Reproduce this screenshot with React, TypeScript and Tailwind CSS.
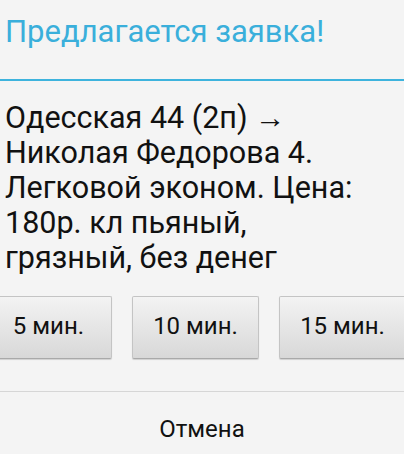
export default function App() {
  const times = ["5 мин.", "10 мин.", "15 мин."];
  const lines = [
    "Одесская 44 (2п) →",
    "Николая Федорова 4.",
    "Легковой эконом. Цена:",
    "180р. кл пьяный,",
    "грязный, без денег",
  ];
  return (
    <div
      className="w-[404px] h-[454px] overflow-hidden bg-[#f4f4f4] text-[#111]"
      style={{ fontFamily: "Roboto, 'Noto Sans', sans-serif" }}
    >
      <div className="h-[79px] pl-[5px] pt-[13px]">
        <h1 className="text-[31px] leading-[38px] text-[#3aafdb]">Предлагается заявка!</h1>
      </div>
      <div className="h-[2px] bg-[#3db3dd]" />
      <p className="pl-[5px] pt-[19px] text-[30.5px] leading-[35px]">
        {lines.map((l) => (
          <span key={l} className="block whitespace-nowrap">
            {l}
          </span>
        ))}
      </p>
      <div className="ml-[-15px] mt-[21px] flex w-[421px] gap-[20px]">
        {times.map((t) => (
          <button
            key={t}
            className="h-[63px] flex-1 rounded-[2px] border border-[#c4c4c4] border-b-[#a9a9a9] bg-gradient-to-b from-[#f3f3f3] to-[#d8d8d8] pb-[4px] text-[24px] text-[#111] shadow-[0_1px_1px_rgba(0,0,0,0.15)]"
          >
            {t}
          </button>
        ))}
      </div>
      <div className="mt-[32px] h-px bg-[#d6d6d6]" />
      <div className="flex h-[74px] items-center justify-center text-[24px]">Отмена</div>
    </div>
  );
}
